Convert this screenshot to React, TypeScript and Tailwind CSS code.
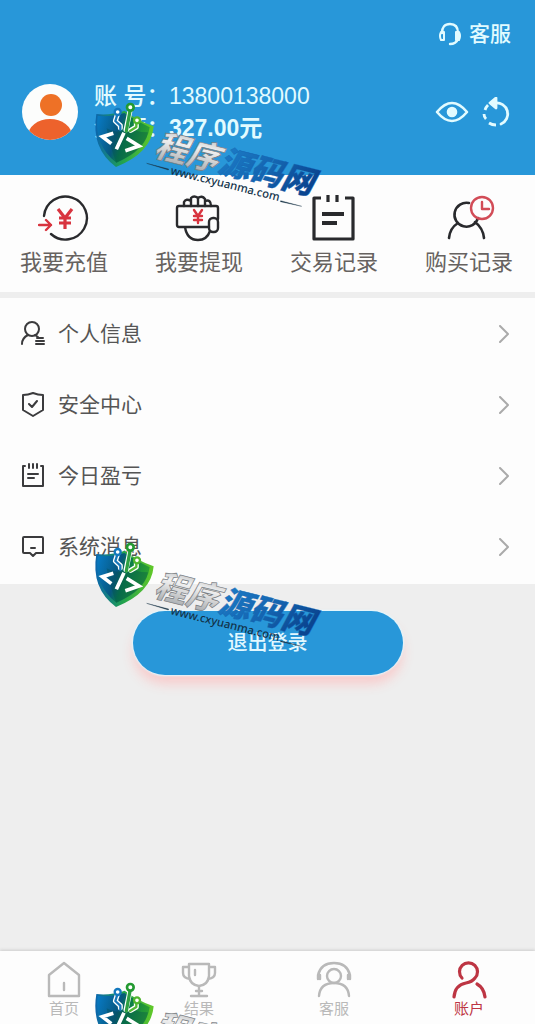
import type { ReactNode } from 'react';

const red = '#d8343f';

function Watermark({ id, className }: { id: string; className: string }) {
  return (
    <svg aria-hidden="true" viewBox="0 0 705 345" className={`pointer-events-none absolute left-[90px] h-[115px] w-[235px] ${className}`}>
      <defs>
        <linearGradient id={`${id}-shield`} x1="0" y1="0.2" x2="1" y2="0.5">
          <stop offset="0" stopColor="#0878c0" />
          <stop offset="0.4" stopColor="#07577f" />
          <stop offset="0.55" stopColor="#087a4b" />
          <stop offset="1" stopColor="#2fa52f" />
        </linearGradient>
        <linearGradient id={`${id}-edge`} x1="0" y1="0" x2="1" y2="0">
          <stop offset="0" stopColor="#0b65ae" />
          <stop offset="0.45" stopColor="#20a050" />
          <stop offset="1" stopColor="#62c928" />
        </linearGradient>
        <linearGradient id={`${id}-silver`} x1="0" y1="0" x2="0" y2="1">
          <stop offset="0" stopColor="#9b9fa3" />
          <stop offset="0.4" stopColor="#f2f2f2" />
          <stop offset="1" stopColor="#9a9ea2" />
        </linearGradient>
        <linearGradient id={`${id}-blue`} x1="0" y1="0" x2="1" y2="0.3">
          <stop offset="0" stopColor="#1d7fca" />
          <stop offset="0.6" stopColor="#1464b0" />
          <stop offset="1" stopColor="#0a4590" />
        </linearGradient>
      </defs>
      <path d="M19 57Q60 62 104 47Q145 78 191 94Q184 174 78 216Q2 160 19 57Z" fill={`url(#${id}-edge)`} />
      <path d="M23 62Q62 68 103 54Q142 80 179 97Q170 164 79 203Q12 151 23 62Z" fill={`url(#${id}-shield)`} />
      <path d="M50 100Q82 118 126 104Q152 112 174 112Q164 168 79 203Q58 150 50 100Z" fill="#034d4b" opacity="0.35" />
      <g fill="none" strokeLinecap="round" strokeLinejoin="round">
        <path d="M82 59L76 78L91 92V98M120 48L108 104M139 84V96L122 106" stroke="#fff" strokeWidth="15" />
        <path d="M82 59L76 78L91 92V104" stroke="#1677b9" strokeWidth="7" />
        <path d="M120 48L109 108" stroke="#2ea143" strokeWidth="10" />
        <path d="M139 84V96L120 108" stroke="#55b936" strokeWidth="7" />
        <circle cx="83" cy="51" r="9" fill="#fff" stroke="#1378bd" strokeWidth="7" />
        <circle cx="121" cy="37" r="10" fill="#fff" stroke="#239a31" strokeWidth="8" />
        <circle cx="141" cy="76" r="9" fill="#fff" stroke="#50b52d" strokeWidth="7" />
      </g>
      <path d="M70 115L37 125L64 146M102 113L79 163M110 130L147 153L106 167" fill="none" stroke="#fff" strokeWidth="11" />
      <g transform="rotate(14 190 182)" fontFamily="'Noto Sans CJK SC', sans-serif" fontWeight="900" fontStyle="italic">
        <text x="189" y="182" fontSize="97" fill={`url(#${id}-silver)`} stroke="#777b7f" strokeWidth="2">程序</text>
        <text x="386" y="182" fontSize="97" fill={`url(#${id}-blue)`} stroke="#1464b0" strokeWidth="1">源码网</text>
      </g>
      <text x="240" y="237" fontSize="34" fontFamily="'Noto Sans', sans-serif" fontWeight="500" fill="#123249" transform="rotate(14 240 237)">www.cxyuanma.com</text>
      <path d="M170 205L236 222L235 225ZM572 317L635 334L571 320Z" fill="#173347" stroke="#173347" strokeWidth="1" />
    </svg>
  );
}

function Icon({ children, className, box, width = 2 }: { children: ReactNode; className: string; box: string; width?: number }) {
  return (
    <svg aria-hidden="true" viewBox={box} fill="none" stroke="currentColor" strokeWidth={width} strokeLinecap="round" strokeLinejoin="round" className={className}>
      {children}
    </svg>
  );
}

const actions = [
  {
    label: '我要充值',
    icon: (
      <>
        <path d="M6 21A21.500 21.500 0 1 1 13 39" />
        <g stroke={red}>
          <path d="M1 30H13M8 25L13 30L8 35" strokeWidth="2.400" />
          <path d="M20 14L27 23L34 14M27 23V34M21 23H33M21 28H33" strokeWidth="3.200" strokeLinecap="butt" />
        </g>
      </>
    ),
  },
  {
    label: '我要提现',
    icon: (
      <>
        <path d="M12 11V7Q14 3 19 6V11M19 6V3Q22 0 26 3V11M26 3Q30 0 33 4V11M33 6Q39 4 39 11" />
        <path d="M37 32H7Q5 32 5 30V13Q5 11 7 11H44Q46 11 46 13V24M13 32Q15 45 26 45Q35 45 38 36" />
        <rect x="37" y="23" width="9" height="14" rx="4" />
        <path d="M22 15L26 21L30 15M26 21V28M22 21H30M22 25H30" stroke={red} />
      </>
    ),
  },
  {
    label: '交易记录',
    icon: (
      <g strokeWidth="3.200" strokeLinecap="butt">
        <path d="M14 3H7V44H46V3H38M21 0V7M30 0V7" />
        <path d="M15 19H37M15 28H30" strokeWidth="4" />
      </g>
    ),
  },
  {
    label: '购买记录',
    icon: (
      <>
        <path d="M27 8A12 12 0 1 0 36 23M16 28Q8 33 7 43M33 27Q41 33 42 43" strokeWidth="2.600" />
        <circle cx="40" cy="13" r="11" stroke="#d24c57" />
        <path d="M40 7V14H47" stroke="#d24c57" />
      </>
    ),
  },
];

const rows = [
  {
    label: '个人信息',
    icon: (
      <>
        <circle cx="11" cy="8" r="7" />
        <path d="M7 14Q1 17 1 23M14 14L17 16M16 17H22M15 20H23M15 23H23" />
      </>
    ),
  },
  { label: '安全中心', icon: <path d="M2 3Q7 3 12 1Q17 3 22 3V18L12 24L2 18ZM8 12L11 15L16 9" /> },
  {
    label: '今日盈亏',
    icon: <path d="M4 3H2V23H22V3H20M8 1V5M12 1V5M16 1V5M7 11H17M7 15H13" />,
  },
  { label: '系统消息', icon: <path d="M3 3H21Q22 3 22 4V19H15L12 22L9 19H3Q2 19 2 18V4Q2 3 3 3ZM10 14H14" /> },
];

const tabs = [
  { label: '首页', icon: <path d="M3 35V14L18 2L33 14V35ZM18 22V29" /> },
  {
    label: '结果',
    icon: <path d="M8 3H28V15Q27 24 18 25Q9 24 8 15ZM8 6H2V12Q2 17 9 18M28 6H34V12Q34 17 27 18M14 9V14M18 25V34M10 35H26M15 30H21" />,
  },
  {
    label: '客服',
    icon: (
      <>
        <circle cx="18" cy="15" r="7" />
        <path d="M3 35Q4 22 18 22Q32 22 33 35M2 18V14Q5 2 18 2Q31 2 34 14V18M4 14V18M32 14V18" />
      </>
    ),
  },
  {
    label: '账户',
    active: true,
    icon: <path d="M11 17A9 9 0 1 1 24 17Q21 21 15 22Q4 24 3 36M26 23Q33 27 34 36" strokeWidth="3.200" />,
  },
];

export default function App() {
  return (
    <div className="relative flex min-h-screen flex-col overflow-hidden bg-[#eeeeee] font-['Liberation_Sans','Noto_Sans_CJK_SC',sans-serif] text-[#555555]">
      <header className="flex h-[175px] flex-col bg-[#2897d9] text-[#e2fbff]">
        <div className="flex h-[68px] items-center justify-end pr-6">
          <button type="button" className="flex items-center gap-[7px] text-[21px] font-medium">
            <Icon box="0 0 24 24" className="size-6" width={2.4}>
              <path d="M4 11Q4 2 12 2Q20 2 20 11V17Q18 22 12 22" />
              <path d="M6 10H3Q1 14 3 18H6ZM18 10H21Q23 14 21 18H18Z" strokeWidth="2" />
            </Icon>
            客服
          </button>
        </div>
        <div className="flex items-center pl-[22px] pr-[25px] pt-3">
          <svg role="img" aria-label="头像" viewBox="0 0 56 56" className="size-14 shrink-0">
            <defs>
              <clipPath id="avatar-clip"><circle cx="28" cy="28" r="28" /></clipPath>
            </defs>
            <circle cx="28" cy="28" r="28" fill="#fcfdfc" />
            <g clipPath="url(#avatar-clip)">
              <circle cx="29" cy="21" r="11" fill="#ee7126" />
              <ellipse cx="28" cy="52" rx="22" ry="17" fill="#ed622c" />
            </g>
          </svg>
          <dl className="ml-4 flex-1 text-[23px] leading-8">
            <div className="flex">
              <dt className="w-[75px] whitespace-nowrap font-medium">账 号：</dt>
              <dd>13800138000</dd>
            </div>
            <div className="flex">
              <dt className="w-[75px] whitespace-nowrap font-medium">余 额：</dt>
              <dd className="font-bold">327.00元</dd>
            </div>
          </dl>
          <div className="flex items-center gap-[13px]">
            <button type="button" aria-label="显示余额">
              <Icon box="0 0 34 24" className="h-6 w-[34px]" width={2.6}>
                <path d="M2 12Q17-6 32 12Q17 30 2 12Z" />
                <circle cx="17" cy="12" r="4" fill="currentColor" />
              </Icon>
            </button>
            <button type="button" aria-label="刷新">
              <Icon box="0 0 28 30" className="h-[30px] w-7" width={2.8}>
                <path d="M13 6A11 11 0 0 1 19 27" />
                <path d="M14 28Q10 28 7 26M4 22Q2 20 2 17M3 13Q4 10 6 8" strokeLinecap="butt" />
                <path d="M14 1V11L8 6Z" fill="currentColor" />
              </Icon>
            </button>
          </div>
        </div>
      </header>

      <section aria-label="快捷操作" className="flex h-[117px] items-start justify-between bg-[#fdfdfd] pl-5 pr-[22px] pt-5">
        {actions.map((item) => (
          <button key={item.label} type="button" className="flex flex-col items-center text-[22px] leading-8 text-[#666260]">
            <Icon box="0 0 53 48" className="h-12 w-[53px] text-[#292a2d]" width={2.4}>{item.icon}</Icon>
            <span className="mt-1">{item.label}</span>
          </button>
        ))}
      </section>

      <ul className="mt-[6px] bg-[#fdfdfd] pb-[2px]">
        {rows.map((item) => (
          <li key={item.label}>
            <a href="#" className="flex h-[71px] items-center pl-[21px] pr-[26px] text-[21px]">
              <Icon box="0 0 24 25" className="h-[25px] w-6 text-[#3b3b3d]">{item.icon}</Icon>
              <span className="ml-[13px] flex-1">{item.label}</span>
              <Icon box="0 0 10 18" className="h-[18px] w-[10px] text-[#aaaaaa]">
                <path d="M1 1L9 9L1 17" />
              </Icon>
            </a>
          </li>
        ))}
      </ul>

      <main className="flex flex-1 justify-center pt-[27px]">
        <button type="button" className="h-16 w-[270px] rounded-full bg-[#2897d9] text-[20px] font-medium text-[#e2f8ff] shadow-[0_0_2px_1px_#e2f8ff,0_9px_12px_#f8cccc]">
          退出登录
        </button>
      </main>

      <nav aria-label="主导航" className="flex h-[73px] justify-between bg-[#fdfdfd] pl-[46px] pr-[48px] pt-[10px] shadow-[0_-1px_3px_#cccccc]">
        {tabs.map((item) => (
          <a key={item.label} href="#" aria-current={item.active ? 'page' : undefined} className={`flex flex-col items-center text-[15px] leading-5 ${item.active ? 'text-[#bd3543]' : 'text-[#b9b9b9]'}`}>
            <Icon box="0 0 36 38" className="h-[38px] w-9" width={2.4}>{item.icon}</Icon>
            <span>{item.label}</span>
          </a>
        ))}
      </nav>

      <Watermark id="mark-a" className="top-[95px]" />
      <Watermark id="mark-b" className="top-[535px]" />
      <Watermark id="mark-c" className="top-[975px]" />
    </div>
  );
}
